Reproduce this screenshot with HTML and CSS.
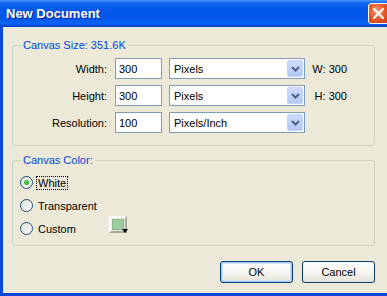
FILE: index.html
```html
<!DOCTYPE html>
<html lang="en">
<head>
  <meta charset="UTF-8" />
  <title>New Document</title>
  <link rel="stylesheet" href="styles.css">
</head>
<body>
  <div class="dialog">
    <div class="title-bar">
      <span class="title">New Document</span>
      <div class="close-btn">
        <svg width="13" height="13" viewBox="0 0 13 13"><path d="M2 2 L11 11 M11 2 L2 11" stroke="#fff" stroke-width="2.2" stroke-linecap="round"/></svg>
      </div>
    </div>

    <div class="client">
      <fieldset class="group">
        <legend class="group-legend">Canvas Size: 351.6K</legend>
        <div class="size-grid">
          <label class="field-label" for="width">Width:</label>
          <input type="text" id="width" class="input-field" value="300" />
          <div class="combo"><span class="combo-text">Pixels</span><span class="combo-btn"><svg width="9" height="6" viewBox="0 0 9 6"><path d="M1 1 L4.5 4.5 L8 1" fill="none" stroke="#4d6185" stroke-width="2"/></svg></span></div>
          <span class="size-info">W: 300</span>

          <label class="field-label" for="height">Height:</label>
          <input type="text" id="height" class="input-field" value="300" />
          <div class="combo"><span class="combo-text">Pixels</span><span class="combo-btn"><svg width="9" height="6" viewBox="0 0 9 6"><path d="M1 1 L4.5 4.5 L8 1" fill="none" stroke="#4d6185" stroke-width="2"/></svg></span></div>
          <span class="size-info">H: 300</span>

          <label class="field-label" for="resolution">Resolution:</label>
          <input type="text" id="resolution" class="input-field" value="100" />
          <div class="combo"><span class="combo-text">Pixels/Inch</span><span class="combo-btn"><svg width="9" height="6" viewBox="0 0 9 6"><path d="M1 1 L4.5 4.5 L8 1" fill="none" stroke="#4d6185" stroke-width="2"/></svg></span></div>
          <span class="size-info"></span>
        </div>
      </fieldset>

      <fieldset class="group color-group">
        <legend class="group-legend">Canvas Color:</legend>
        <div class="radio-list">
          <div class="radio-row">
            <span class="radio checked"></span>
            <span class="radio-label focused">White</span>
          </div>
          <div class="radio-row">
            <span class="radio"></span>
            <span class="radio-label">Transparent</span>
          </div>
          <div class="radio-row">
            <span class="radio"></span>
            <span class="radio-label custom-label">Custom</span>
            <span class="swatch"><span class="swatch-fill"></span><span class="swatch-arrow"></span></span>
          </div>
        </div>
      </fieldset>

      <div class="button-row">
        <button class="button default">OK</button>
        <button class="button">Cancel</button>
      </div>
    </div>
  </div>
</body>
</html>
```

FILE: styles.css
```css
body {
  margin: 0;
  width: 387px;
  height: 296px;
  overflow: hidden;
  font-family: 'Liberation Sans', Arial, sans-serif;
  font-size: 11px;
  color: #000;
  background: #ece9d8;
}

.dialog {
  display: flex;
  flex-direction: column;
  height: 296px;
}

.title-bar {
  height: 27px;
  display: flex;
  align-items: center;
  justify-content: space-between;
  background: linear-gradient(to bottom, #4a96ff 0, #0e64f0 3px, #0358ea 10px, #0358ea 18px, #0a63f4 24px, #0046d2 26px, #0040c8 27px);
}

.title {
  margin-left: 6px;
  color: #fff;
  font-weight: bold;
  font-size: 13px;
  text-shadow: 1px 1px 0 #0a1e8c;
}

.close-btn {
  width: 21px;
  height: 21px;
  margin-right: -2px;
  box-sizing: border-box;
  border: 1px solid #fff;
  border-radius: 3px;
  background: radial-gradient(circle at 40% 35%, #f59a72 0, #e85a2c 45%, #cc3a10 100%);
  display: flex;
  align-items: center;
  justify-content: center;
}

.client {
  flex: 1;
  border-left: 3px solid #0b48d8;
  border-bottom: 3px solid #0b48d8;
  padding: 12px 12px 0 9px;
  display: flex;
  flex-direction: column;
}

.group {
  margin: 0;
  padding: 6px 0 12px 0;
  min-width: 0;
  border: 1px solid #d0d0bf;
  border-radius: 3px;
}

.group-legend {
  margin-left: 8px;
  padding: 0 2px;
  color: #0046d5;
  line-height: 13px;
}

.size-grid {
  display: grid;
  grid-template-columns: 95px 47px 136px 35px;
  column-gap: 7px;
  row-gap: 6px;
  align-items: center;
}

.field-label {
  text-align: right;
  padding-right: 1px;
}

.input-field {
  box-sizing: border-box;
  width: 47px;
  height: 21px;
  margin: 0;
  padding: 0 3px;
  border: 1px solid #7f9db9;
  font-family: inherit;
  font-size: 11px;
  background: #fff;
}

.combo {
  box-sizing: border-box;
  height: 21px;
  border: 1px solid #7f9db9;
  background: #fff;
  display: flex;
  align-items: center;
  padding: 1px;
}

.combo-text {
  flex: 1;
  padding-left: 3px;
}

.combo-btn {
  width: 16px;
  height: 17px;
  border-radius: 2px;
  background: linear-gradient(to bottom, #cddbfc, #b4c8f6);
  border: 1px solid #c3d3fd;
  box-sizing: border-box;
  display: flex;
  align-items: center;
  justify-content: center;
}

.size-info {
  text-align: right;
  white-space: nowrap;
}

.color-group {
  margin-top: 8px;
  padding: 9px 0 10px 0;
}

.radio-list {
  display: flex;
  flex-direction: column;
  gap: 10px;
  padding-left: 7px;
}

.radio-row {
  display: flex;
  align-items: center;
  height: 13px;
}

.radio {
  box-sizing: border-box;
  width: 13px;
  height: 13px;
  border: 1px solid #1c5180;
  border-radius: 50%;
  background: linear-gradient(135deg, #dcdcd7, #fff);
  display: flex;
  align-items: center;
  justify-content: center;
}

.radio.checked::after {
  content: "";
  width: 5px;
  height: 5px;
  border-radius: 50%;
  background: radial-gradient(circle at 35% 35%, #55d255, #21a121);
}

.radio-label {
  margin-left: 3px;
  padding: 0 1px;
  line-height: 12px;
  border: 1px dotted transparent;
}

.radio-label.focused {
  border-color: #000;
}

.custom-label {
  width: 69px;
}

.swatch {
  position: relative;
  box-sizing: border-box;
  width: 18px;
  height: 17px;
  margin-top: -9px;
  border: 2px solid;
  border-color: #fff #aca899 #aca899 #fff;
  background: #ece9d8;
}

.swatch-fill {
  display: block;
  width: 12px;
  height: 11px;
  margin: 1px;
  background: #9dcd9d;
  border: 1px solid #8ab88a;
  box-sizing: border-box;
}

.swatch-arrow {
  position: absolute;
  right: -3px;
  bottom: -2px;
  width: 0;
  height: 0;
  border-left: 3px solid transparent;
  border-right: 3px solid transparent;
  border-top: 4px solid #000;
}

.button-row {
  margin-top: 15px;
  display: flex;
  justify-content: flex-end;
  gap: 9px;
}

.button {
  box-sizing: border-box;
  width: 73px;
  height: 22px;
  padding: 0;
  border: 1px solid #003c74;
  border-radius: 3px;
  background: linear-gradient(to bottom, #fff 0, #f4f3ee 60%, #e3e1d6 100%);
  font-family: inherit;
  font-size: 11px;
  color: #000;
}

.button.default {
  box-shadow: inset 0 0 0 1px #a9c6f5, inset 0 0 0 2px #cedef9;
}
```
